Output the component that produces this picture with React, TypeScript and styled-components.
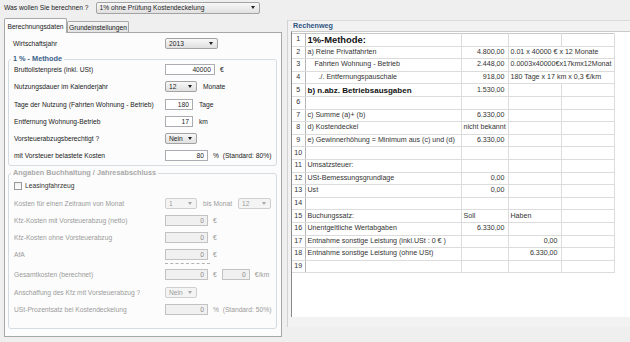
import React from "react";
import styled, { createGlobalStyle } from "styled-components";

const GlobalStyle = createGlobalStyle`
  html, body {
    margin: 0;
    padding: 0;
    background: #efefef;
  }
  * {
    box-sizing: border-box;
  }
`;

type SheetRow = {
  a?: string;
  b?: string;
  c?: string;
  note?: string;
  heading?: "large" | "small";
  indent?: number;
  textCols?: boolean;
};

const sheet: SheetRow[] = [
  { a: "1%-Methode:", heading: "large" },
  { a: "a) Reine Privatfahrten", b: "4.800,00", note: "0.01 x 40000 € x 12 Monate" },
  { a: "Fahrten Wohnung - Betrieb", indent: 7, b: "2.448,00", note: "0.0003x40000€x17kmx12Monat" },
  { a: "./. Entfernungspauschale", indent: 11, b: "918,00", note: "180 Tage x 17 km x 0,3 €/km" },
  { a: "b) n.abz. Betriebsausgaben", heading: "small", b: "1.530,00" },
  {},
  { a: "c) Summe (a)+ (b)", b: "6.330,00" },
  { a: "d) Kostendeckel", b: "nicht bekannt" },
  { a: "e) Gewinnerhöhung = Minimum aus (c) und (d)", b: "6.330,00" },
  {},
  { a: "Umsatzsteuer:" },
  { a: "USt-Bemessungsgrundlage", b: "0,00" },
  { a: "Ust", b: "0,00" },
  {},
  { a: "Buchungssatz:", b: "Soll", c: "Haben", textCols: true },
  { a: "Unentgeltliche Wertabgaben", b: "6.330,00" },
  { a: "Entnahme sonstige Leistung (inkl.USt : 0 € )", c: "0,00" },
  { a: "Entnahme sonstige Leistung (ohne USt)", c: "6.330,00" },
  {},
];

const App: React.FC = () => {
  return (
    <Window>
      <GlobalStyle />
      <TopBar>
        <span>Was wollen Sie berechnen ?</span>
        <Combo $w={164} $h={12}>
          1% ohne Prüfung Kostendeckelung
          <Arrow />
        </Combo>
      </TopBar>

      <Main>
        <LeftCol>
          <TabStrip>
            <Tab $active $w={63}>Berechnungsdaten</Tab>
            <Tab $w={62}>Grundeinstellungen</Tab>
          </TabStrip>
          <TabPanel>
            <FieldRow $outer>
              <Label>Wirtschaftsjahr</Label>
              <Controls>
                <Combo $w={53}>
                  2013
                  <Arrow />
                </Combo>
              </Controls>
            </FieldRow>

            <Group>
              <GroupTitle>1 % - Methode</GroupTitle>
              <FieldRow>
                <Label>Bruttolistenpreis (inkl. USt)</Label>
                <Controls>
                  <NumInput $w={50} value="40000" readOnly />
                  <span>€</span>
                </Controls>
              </FieldRow>
              <FieldRow>
                <Label>Nutzungsdauer im Kalenderjahr</Label>
                <Controls $gap={6}>
                  <Combo $w={32}>
                    12
                    <Arrow />
                  </Combo>
                  <span>Monate</span>
                </Controls>
              </FieldRow>
              <FieldRow>
                <Label>Tage der Nutzung (Fahrten Wohnung - Betrieb)</Label>
                <Controls $gap={6}>
                  <NumInput $w={28} value="180" readOnly />
                  <span>Tage</span>
                </Controls>
              </FieldRow>
              <FieldRow>
                <Label>Entfernung Wohnung-Betrieb</Label>
                <Controls $gap={6}>
                  <NumInput $w={28} value="17" readOnly />
                  <span>km</span>
                </Controls>
              </FieldRow>
              <FieldRow>
                <Label>Vorsteuerabzugsberechtigt ?</Label>
                <Controls>
                  <Combo $w={32}>
                    Nein
                    <Arrow />
                  </Combo>
                </Controls>
              </FieldRow>
              <FieldRow>
                <Label>mit Vorsteuer belastete Kosten</Label>
                <Controls>
                  <NumInput $w={43} value="80" readOnly />
                  <span>% &nbsp;(Standard: 80%)</span>
                </Controls>
              </FieldRow>
            </Group>

            <Group $pb={10}>
              <GroupTitle $disabled>Angaben Buchhaltung / Jahresabschluss</GroupTitle>
              <CheckRow>
                <CheckBox />
                <span>Leasingfahrzeug</span>
              </CheckRow>
              <FieldRow $disabled>
                <Label>Kosten für einen Zeitraum von Monat</Label>
                <Controls $gap={6}>
                  <Combo $w={32} $disabled>
                    1
                    <Arrow $disabled />
                  </Combo>
                  <span>bis Monat</span>
                  <Combo $w={33} $disabled>
                    12
                    <Arrow $disabled />
                  </Combo>
                </Controls>
              </FieldRow>
              <FieldRow $disabled>
                <Label>Kfz-Kosten mit Vorsteuerabzug (netto)</Label>
                <Controls>
                  <NumInput $w={43} $disabled value="0" readOnly />
                  <span>€</span>
                </Controls>
              </FieldRow>
              <FieldRow $disabled>
                <Label>Kfz-Kosten ohne Vorsteuerabzug</Label>
                <Controls>
                  <NumInput $w={43} $disabled value="0" readOnly />
                  <span>€</span>
                </Controls>
              </FieldRow>
              <FieldRow $disabled>
                <Label>AfA</Label>
                <Controls>
                  <NumInput $w={43} $disabled value="0" readOnly />
                  <span>€</span>
                </Controls>
              </FieldRow>
              <SumLine />
              <FieldRow $disabled>
                <Label>Gesamtkosten (berechnet)</Label>
                <Controls>
                  <NumInput $w={43} $disabled value="0" readOnly />
                  <span>€</span>
                  <NumInput $w={28} $disabled value="0" readOnly />
                  <span>€/km</span>
                </Controls>
              </FieldRow>
              <FieldRow $disabled>
                <Label>Anschaffung des Kfz mit Vorsteuerabzug ?</Label>
                <Controls>
                  <Combo $w={32} $disabled>
                    Nein
                    <Arrow $disabled />
                  </Combo>
                </Controls>
              </FieldRow>
              <FieldRow $disabled>
                <Label>USt-Prozentsatz bei Kostendeckelung</Label>
                <Controls>
                  <NumInput $w={43} $disabled value="0" readOnly />
                  <span>% &nbsp;(Standard: 50%)</span>
                </Controls>
              </FieldRow>
            </Group>
          </TabPanel>
        </LeftCol>

        <RightPanel>
          <PanelTitle>Rechenweg</PanelTitle>
          <SheetArea>
            <Sheet>
              <colgroup>
                <col style={{ width: 13 }} />
                <col style={{ width: 156 }} />
                <col style={{ width: 47 }} />
                <col style={{ width: 53 }} />
                <col style={{ width: 53 }} />
              </colgroup>
              <tbody>
                {sheet.map((row, i) => (
                  <tr key={i}>
                    <RowNum>{i + 1}</RowNum>
                    <Cell $heading={row.heading} $indent={row.indent}>
                      {row.a}
                    </Cell>
                    <Cell $right={!row.textCols}>{row.b}</Cell>
                    {row.note ? (
                      <Cell colSpan={2}>{row.note}</Cell>
                    ) : (
                      <>
                        <Cell $right={!row.textCols}>{row.c}</Cell>
                        <Cell />
                      </>
                    )}
                  </tr>
                ))}
              </tbody>
            </Sheet>
          </SheetArea>
        </RightPanel>
      </Main>
    </Window>
  );
};

const Window = styled.div`
  width: 630px;
  height: 342px;
  overflow: hidden;
  background: #efefef;
  font-family: "Liberation Sans", Arial, sans-serif;
  font-size: 6.7px;
  color: #222;
`;

const TopBar = styled.div`
  display: flex;
  align-items: center;
  gap: 7px;
  height: 15px;
  padding-left: 4px;
`;

const Combo = styled.div<{ $w: number; $h?: number; $disabled?: boolean }>`
  display: flex;
  align-items: center;
  justify-content: space-between;
  width: ${(p) => p.$w}px;
  height: ${(p) => p.$h ?? 11}px;
  padding: 0 4px 0 3px;
  border: 1px solid ${(p) => (p.$disabled ? "#cfcfcf" : "#a3a3a3")};
  border-radius: 2px;
  background: ${(p) =>
    p.$disabled ? "#f4f4f4" : "linear-gradient(#f7f7f7, #e0e0e0)"};
  color: ${(p) => (p.$disabled ? "#9c9c9c" : "#1e1e1e")};
  white-space: nowrap;
`;

const Arrow = styled.span<{ $disabled?: boolean }>`
  width: 0;
  height: 0;
  border-left: 2.5px solid transparent;
  border-right: 2.5px solid transparent;
  border-top: 3px solid ${(p) => (p.$disabled ? "#a8a8a8" : "#222")};
`;

const Main = styled.div`
  display: flex;
  gap: 5px;
  margin-top: 3px;
  padding-left: 4px;
`;

const LeftCol = styled.div`
  width: 278px;
`;

const TabStrip = styled.div`
  display: flex;
  align-items: flex-end;
  height: 14px;
`;

const Tab = styled.div<{ $active?: boolean; $w: number }>`
  position: relative;
  z-index: ${(p) => (p.$active ? 2 : 1)};
  display: flex;
  align-items: center;
  justify-content: center;
  width: ${(p) => p.$w}px;
  height: ${(p) => (p.$active ? 15 : 11)}px;
  margin-bottom: ${(p) => (p.$active ? -1 : 0)}px;
  border: 1px solid #a7a7a7;
  border-bottom: none;
  border-radius: 2px 2px 0 0;
  background: ${(p) =>
    p.$active ? "#fcfcfc" : "linear-gradient(#f5f5f5, #e3e3e3)"};
  white-space: nowrap;
`;

const TabPanel = styled.div`
  height: 305px;
  padding: 2px 4px 0 3px;
  border: 1px solid #a7a7a7;
  background: #fcfcfc;
`;

const Group = styled.section<{ $pb?: number }>`
  margin-top: 7px;
  padding-bottom: ${(p) => p.$pb ?? 1}px;
  border: 1px solid #d4dbe1;
  border-radius: 3px;
`;

const GroupTitle = styled.div<{ $disabled?: boolean }>`
  width: max-content;
  height: 8px;
  margin: -5px 0 -2px 2px;
  padding: 0 2px;
  background: #fcfcfc;
  line-height: 8px;
  font-size: 7.3px;
  font-weight: bold;
  color: ${(p) => (p.$disabled ? "#a9a9a9" : "#3a6288")};
`;

const FieldRow = styled.div<{ $disabled?: boolean; $outer?: boolean }>`
  display: grid;
  grid-template-columns: ${(p) => (p.$outer ? 157 : 156)}px auto;
  align-items: center;
  height: 17.2px;
  color: ${(p) => (p.$disabled ? "#9b9b9b" : "#222")};
`;

const Label = styled.span`
  padding-left: 5px;
  white-space: nowrap;
`;

const Controls = styled.div<{ $gap?: number }>`
  display: flex;
  align-items: center;
  gap: ${(p) => p.$gap ?? 5}px;
  white-space: nowrap;
`;

const NumInput = styled.input<{ $w: number; $disabled?: boolean }>`
  width: ${(p) => p.$w}px;
  height: 11px;
  margin: 0;
  padding: 0 3px 0 0;
  border: 1px solid ${(p) => (p.$disabled ? "#c2c2c2" : "#abadb3")};
  background: ${(p) => (p.$disabled ? "#f0f0f0" : "#fff")};
  color: ${(p) => (p.$disabled ? "#8d8d8d" : "#1e1e1e")};
  font: inherit;
  text-align: right;
  outline: none;
`;

const CheckRow = styled.div`
  display: flex;
  align-items: center;
  gap: 3px;
  height: 17.2px;
  margin-top: 2px;
  padding-left: 5px;
  color: #333;
`;

const CheckBox = styled.span`
  width: 8px;
  height: 8px;
  border: 1px solid #9a9a9a;
  background: linear-gradient(#f0f0f0, #fff);
`;

const SumLine = styled.div`
  width: 45px;
  height: 3px;
  margin-left: 156px;
  border-top: 1px dashed #b3b3b3;
`;

const RightPanel = styled.div`
  display: flex;
  flex-direction: column;
  width: 343px;
  height: 307px;
  margin-top: 2px;
  padding: 0 0 10px 3px;
  border-top: 1px solid #dadada;
  border-left: 1px solid #d2d2d2;
  background: #f2f2f2;
`;

const PanelTitle = styled.div`
  height: 10px;
  padding: 1px 0 0 2px;
  line-height: 8px;
  font-size: 7.2px;
  font-weight: bold;
  color: #2d5482;
`;

const SheetArea = styled.div`
  flex: 1;
  padding-top: 1px;
  border-top: 1px solid #cacaca;
  border-left: 1px solid #8a8a8a;
  background: #fff;
`;

const Sheet = styled.table`
  width: 322px;
  table-layout: fixed;
  border-collapse: collapse;
  border-top: 1px solid #c9c9c9;
  border-right: 1px solid #808080;
  border-bottom: 1px solid #808080;
  font-size: 7.1px;
  color: #333;

  tr {
    height: 12.6px;
  }
`;

const RowNum = styled.td`
  padding: 0;
  border-right: 1px solid #b4b4b4;
  border-bottom: 1px solid #dcdcdc;
  text-align: center;
  line-height: 11px;
`;

const Cell = styled.td<{
  $right?: boolean;
  $heading?: "large" | "small";
  $indent?: number;
}>`
  padding: 0 3px 0 ${(p) => 2 + (p.$indent ?? 0)}px;
  border-right: 1px solid #dcdcdc;
  border-bottom: 1px solid #dcdcdc;
  text-align: ${(p) => (p.$right ? "right" : "left")};
  white-space: nowrap;
  overflow: hidden;
  line-height: 11px;
  font-weight: ${(p) => (p.$heading ? "bold" : "normal")};
  font-size: ${(p) =>
    p.$heading === "large" ? "9.4px" : p.$heading === "small" ? "8px" : "inherit"};
  color: ${(p) => (p.$heading ? "#111" : "inherit")};
`;

export default App;
